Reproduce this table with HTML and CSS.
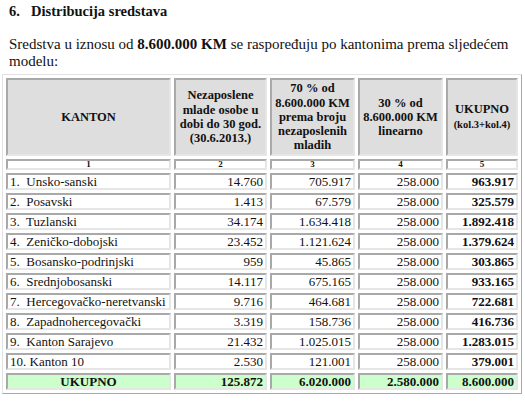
FILE: index.html
```html
<!doctype html>
<html lang="bs">
<head>
  <meta charset="utf-8">
  <title>Distribucija sredstava</title>
  <link rel="stylesheet" href="styles.css">
</head>
<body>

<h2 class="section-title"><span class="section-num">6.</span>Distribucija sredstava</h2>

<p class="intro">Sredstva u iznosu od <b>8.600.000 KM</b> se raspoređuju po kantonima prema sljedećem modelu:</p>

<table class="dist">
  <colgroup>
    <col class="c-kanton">
    <col class="c-osobe">
    <col class="c-70">
    <col class="c-30">
    <col class="c-total">
  </colgroup>
  <thead>
    <tr class="head">
      <th>KANTON</th>
      <th>Nezaposlene mlade osobe u dobi do 30&nbsp;god. (30.6.2013.)</th>
      <th>70 % od 8.600.000&nbsp;KM prema broju nezaposlenih mladih</th>
      <th>30 % od 8.600.000&nbsp;KM linearno</th>
      <th>UKUPNO<br><span class="small">(kol.3+kol.4)</span></th>
    </tr>
    <tr class="nums">
      <th>1</th><th>2</th><th>3</th><th>4</th><th>5</th>
    </tr>
  </thead>
  <tbody>
    <tr><td class="name">1.&nbsp; Unsko-sanski</td><td>14.760</td><td>705.917</td><td>258.000</td><td class="sum">963.917</td></tr>
    <tr><td class="name">2.&nbsp; Posavski</td><td>1.413</td><td>67.579</td><td>258.000</td><td class="sum">325.579</td></tr>
    <tr><td class="name">3.&nbsp; Tuzlanski</td><td>34.174</td><td>1.634.418</td><td>258.000</td><td class="sum">1.892.418</td></tr>
    <tr><td class="name">4.&nbsp; Zeničko-dobojski</td><td>23.452</td><td>1.121.624</td><td>258.000</td><td class="sum">1.379.624</td></tr>
    <tr><td class="name">5.&nbsp; Bosansko-podrinjski</td><td>959</td><td>45.865</td><td>258.000</td><td class="sum">303.865</td></tr>
    <tr><td class="name">6.&nbsp; Srednjobosanski</td><td>14.117</td><td>675.165</td><td>258.000</td><td class="sum">933.165</td></tr>
    <tr><td class="name">7.&nbsp; Hercegovačko-neretvanski</td><td>9.716</td><td>464.681</td><td>258.000</td><td class="sum">722.681</td></tr>
    <tr><td class="name">8.&nbsp; Zapadnohercegovački</td><td>3.319</td><td>158.736</td><td>258.000</td><td class="sum">416.736</td></tr>
    <tr><td class="name">9.&nbsp; Kanton Sarajevo</td><td>21.432</td><td>1.025.015</td><td>258.000</td><td class="sum">1.283.015</td></tr>
    <tr><td class="name">10. Kanton 10</td><td>2.530</td><td>121.001</td><td>258.000</td><td class="sum">379.001</td></tr>
    <tr class="total"><td class="name">UKUPNO</td><td>125.872</td><td>6.020.000</td><td>2.580.000</td><td>8.600.000</td></tr>
  </tbody>
</table>

</body>
</html>
```

FILE: styles.css
```css
/* Page */
html {
  background-color: #fff;
}

body {
  color: #111;
  font-family: "Liberation Serif", "Times New Roman", serif;
  margin: 0;
  padding: 2px 2px 0;
}

.section-title {
  font-size: 14.5px;
  line-height: 18px;
  margin: 0 0 0 7px;
}

.section-num {
  display: inline-block;
  width: 22px;
}

.intro {
  font-size: 15px;
  line-height: 17px;
  margin: 16px 0 0 7px;
}

/* Table with the old bevelled borders */

.dist {
  border: 1px solid;
  border-color: #e2e2e2 #a8a8a8 #a8a8a8 #e2e2e2;
  border-spacing: 3px;
  margin-top: 4px;
  table-layout: fixed;
  width: 520px;
}

.c-kanton { width: 165px; }
.c-osobe  { width: 93px; }
.c-70     { width: 85px; }
.c-30     { width: 85px; }
.c-total  { width: 72px; }

.dist th,
.dist td {
  border: 2px solid;
  border-color: #a9a9a9 #e6e6e6 #e6e6e6 #a9a9a9;
  padding: 0 2px;
  white-space: nowrap;
}

.dist th {
  font-weight: bold;
  text-align: center;
}

.head th {
  background-color: #dedede;
  font-size: 12.5px;
  height: 74px;
  line-height: 14.3px;
  padding: 0;
  white-space: normal;
}

.head .small {
  font-size: 10.5px;
}

.nums th {
  font-size: 9px;
  height: 7px;
  line-height: 7px;
  padding: 0;
}

.dist td {
  font-size: 13px;
  height: 13px;
  line-height: 13px;
  text-align: right;
}

.dist td.name {
  padding-left: 2px;
  text-align: left;
}

.dist td.sum {
  font-weight: bold;
}

.total td {
  background-color: #ccffcc;
  font-weight: bold;
}

.total td.name {
  text-align: center;
}
```
